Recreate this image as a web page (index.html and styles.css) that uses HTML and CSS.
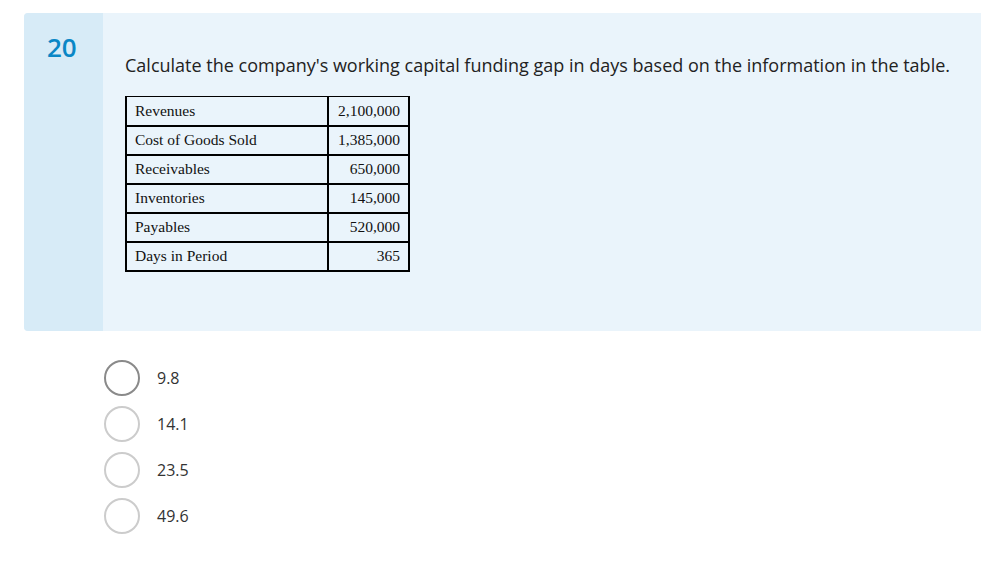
FILE: index.html
```html
<!DOCTYPE html>
<html>
<head>
<meta charset="utf-8">
<link rel="stylesheet" href="styles.css">
</head>
<body>
<div class="card">
  <div class="qnum">20</div>
  <div class="qbody">
    <p class="qtext">Calculate the company's working capital funding gap in days based on the information in the table.</p>
    <table class="data">
      <tr class="first"><td>Revenues</td><td class="num">2,100,000</td></tr>
      <tr><td>Cost of Goods Sold</td><td class="num">1,385,000</td></tr>
      <tr><td>Receivables</td><td class="num">650,000</td></tr>
      <tr><td>Inventories</td><td class="num">145,000</td></tr>
      <tr><td>Payables</td><td class="num">520,000</td></tr>
      <tr><td>Days in Period</td><td class="num">365</td></tr>
    </table>
  </div>
</div>
<ul class="options">
  <li class="opt"><span class="radio focus"></span><span class="label">9.8</span></li>
  <li class="opt"><span class="radio"></span><span class="label">14.1</span></li>
  <li class="opt"><span class="radio"></span><span class="label">23.5</span></li>
  <li class="opt"><span class="radio"></span><span class="label">49.6</span></li>
</ul>
</body>
</html>
```
FILE: styles.css
```css
html, body {
  margin: 0;
  padding: 0;
  background: #ffffff;
  font-family: "Open Sans", "Noto Sans", sans-serif;
}
.card {
  display: flex;
  margin: 13px 0 0 24px;
  height: 318px;
  background: #eaf4fb;
  border-radius: 4px 0 0 4px;
  overflow: hidden;
}
.qnum {
  width: 79px;
  flex: none;
  background: #d7ebf7;
  color: #0a87c6;
  font-size: 26px;
  font-weight: 600;
  line-height: 1;
  padding-top: 21px;
  box-sizing: border-box;
  padding-left: 23px;
}
.qbody {
  padding: 0 0 0 22px;
}
.qtext {
  margin: 40px 0 0 0;
  font-size: 18px;
  line-height: 24px;
  color: #222;
}
.data {
  margin-top: 19px;
  border-collapse: collapse;
  font-family: "Liberation Serif", "Times New Roman", serif;
  font-size: 15.5px;
  color: #111;
}
.data td {
  border: 2px solid #000;
  height: 29px;
  padding: 0 8px 0 8px;
  box-sizing: border-box;
}
.data td:first-child {
  width: 202px;
}
.data td.num {
  width: 81px;
  text-align: right;
}
.data tr.first td {
  border-top-width: 1.5px;
}
.options {
  list-style: none;
  margin: 29px 0 0 0;
  padding: 0 0 0 104px;
}
.opt {
  display: flex;
  align-items: center;
  height: 36px;
  margin-bottom: 10px;
}
.radio {
  width: 36px;
  height: 36px;
  box-sizing: border-box;
  border: 2px solid #cccccc;
  border-radius: 50%;
  background: #fff;
  flex: none;
}
.radio.focus {
  border-color: #8a8a8a;
}
.label {
  margin-left: 17px;
  font-size: 16px;
  color: #333;
}
```
